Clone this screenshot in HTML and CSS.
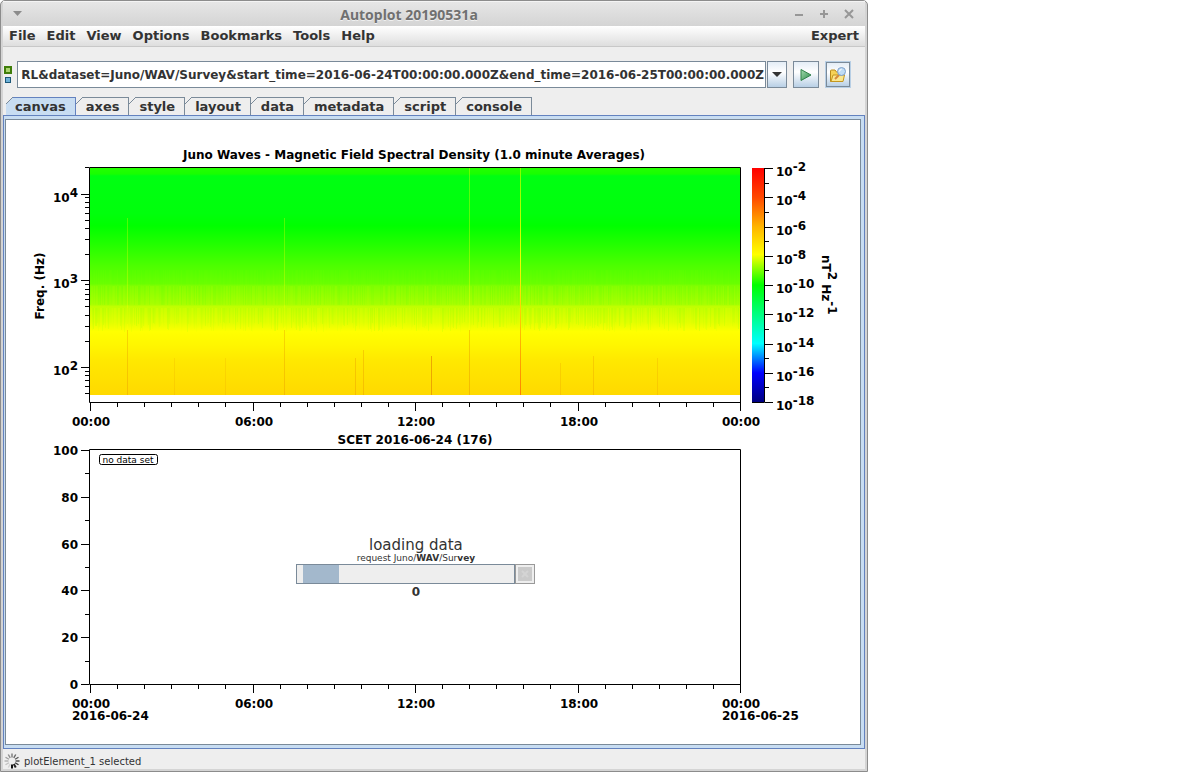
FILE: index.html
```
<!DOCTYPE html>
<html lang="en">
<head>
    <meta charset="UTF-8">
    <meta name="viewport" content="width=device-width, initial-scale=1.0">
    <title>Autoplot 20190531a</title>
    <link rel="stylesheet" href="styles.css">
</head>
<body>

<div class="window">
    <header class="titlebar">
        <button class="title-btn" aria-label="Window menu"><svg width="12" height="12"><path d="M1 3h9l-4.500 5z" fill="#8c8c8c"/></svg></button>
        <h1>Autoplot 20190531a</h1>
        <div class="title-actions">
            <button class="title-btn" aria-label="Minimize"><svg width="10" height="10"><path d="M1 6h8" stroke="#979797" stroke-width="2"/></svg></button>
            <button class="title-btn" aria-label="Maximize"><svg width="10" height="10"><path d="M1 5h8M5 1v8" stroke="#979797" stroke-width="2"/></svg></button>
            <button class="title-btn" aria-label="Close"><svg width="10" height="10"><path d="M1 1l8 8M9 1l-8 8" stroke="#979797" stroke-width="2"/></svg></button>
        </div>
    </header>

    <nav class="menubar">
        <button>File</button>
        <button>Edit</button>
        <button>View</button>
        <button>Options</button>
        <button>Bookmarks</button>
        <button>Tools</button>
        <button>Help</button>
        <button class="expert">Expert</button>
    </nav>

    <div class="addressbar">
        <svg class="source-icon" width="9" height="20">
            <rect x="1" y="2" width="6" height="6" fill="#a9d46f" stroke="#3f7d0a" stroke-width="2"/>
            <rect x="1.500" y="12.500" width="5" height="5" fill="#6db1d8" stroke="#1c5878"/>
        </svg>
        <input type="text" class="address" aria-label="Data address" value="RL&amp;dataset=Juno/WAV/Survey&amp;start_time=2016-06-24T00:00:00.000Z&amp;end_time=2016-06-25T00:00:00.000Z">
        <button class="metal-btn drop" aria-label="Recent addresses"><svg width="10" height="6"><path d="M0 0h10l-5 5z" fill="#333"/></svg></button>
        <button class="metal-btn" aria-label="Plot">
            <svg width="14" height="14">
                <defs><linearGradient id="go" x2="1" y2="1"><stop stop-color="#a5dcb0"/><stop offset="1" stop-color="#2c8a4b"/></linearGradient></defs>
                <path d="M2 1.500l10 5.500-10 5.500z" fill="url(#go)" stroke="#2f8049"/>
            </svg>
        </button>
        <button class="metal-btn inspect" aria-label="Inspect address">
            <svg width="16" height="16" viewBox="0 0 16 16">
                <path d="M.5 14.500V4q0-1 1-1h3.500l1.500 2h5.500v9.500z" fill="#f6d257" stroke="#b98b1b"/>
                <path d="M1 14.500l2-6.500h11.500l-1.500 6.500z" fill="#fbe78e" stroke="#c3961f"/>
                <path d="M9 8l-4 4" stroke="#d58a3d" stroke-width="2"/>
                <circle cx="11.500" cy="4.500" r="4" fill="#bfdcf5" stroke="#7d9fc9"/>
                <path d="M9.500 4.500q0-2 2-2" fill="none" stroke="#fff"/>
            </svg>
        </button>
    </div>

    <div class="tabs" role="tablist">
        <button class="tab active" role="tab" aria-selected="true">canvas</button>
        <button class="tab" role="tab">axes</button>
        <button class="tab" role="tab">style</button>
        <button class="tab" role="tab">layout</button>
        <button class="tab" role="tab">data</button>
        <button class="tab" role="tab">metadata</button>
        <button class="tab" role="tab">script</button>
        <button class="tab" role="tab">console</button>
    </div>

    <main class="pane">
        <div class="canvas">
            <svg class="plots" viewBox="6 120 854 624" preserveAspectRatio="xMidYMin meet">
                <defs>
                    <linearGradient id="spectrum" gradientUnits="userSpaceOnUse" x1="0" y1="168" x2="0" y2="395">
                        <stop offset="0" stop-color="#24ff00"/>
                        <stop offset="0.026" stop-color="#18ff00"/>
                        <stop offset="0.035" stop-color="#00ff12"/>
                        <stop offset="0.2" stop-color="#00ff0c"/>
                        <stop offset="0.255" stop-color="#00ff00"/>
                        <stop offset="0.34" stop-color="#24ff00"/>
                        <stop offset="0.43" stop-color="#4cff00"/>
                        <stop offset="0.51" stop-color="#68ff00"/>
                        <stop offset="0.52" stop-color="#80ff00"/>
                        <stop offset="0.6" stop-color="#a4ff00"/>
                        <stop offset="0.61" stop-color="#bfff00"/>
                        <stop offset="0.68" stop-color="#e0ff00"/>
                        <stop offset="0.72" stop-color="#ffff00"/>
                        <stop offset="0.78" stop-color="#fff600"/>
                        <stop offset="0.85" stop-color="#ffe800"/>
                        <stop offset="1" stop-color="#ffd900"/>
                    </linearGradient>
                    <linearGradient id="rainbow" x2="0" y2="1">
                        <stop offset="0" stop-color="#ff0000"/>
                        <stop offset="0.125" stop-color="#ff4800"/>
                        <stop offset="0.25" stop-color="#ffb400"/>
                        <stop offset="0.37" stop-color="#ffff00"/>
                        <stop offset="0.5" stop-color="#00ff00"/>
                        <stop offset="0.625" stop-color="#00ff80"/>
                        <stop offset="0.75" stop-color="#00ffff"/>
                        <stop offset="0.875" stop-color="#0000ff"/>
                        <stop offset="1" stop-color="#000080"/>
                    </linearGradient>
                    <linearGradient id="burst" gradientUnits="userSpaceOnUse" x1="0" y1="168" x2="0" y2="395">
                        <stop offset="0" stop-color="#80ff00"/>
                        <stop offset="0.4" stop-color="#f0ff00"/>
                        <stop offset="0.55" stop-color="#ffe000"/>
                        <stop offset="1" stop-color="#ff8000"/>
                    </linearGradient>
                </defs>

                <text class="middle" x="414" y="159">Juno Waves - Magnetic Field Spectral Density (1.0 minute Averages)</text>
                <rect x="90" y="168" width="650" height="227" fill="url(#spectrum)"/>
                <g id="streaks"></g>
                <rect x="520" y="168" width="1" height="227" fill="url(#burst)"/>
                <path class="line" d="M89.500 167.500H740.500V402.500H89.500z"/>
                <rect x="752" y="168" width="12" height="234" fill="url(#rainbow)"/>
                <path class="line" d="M752 402.500H764.500V168"/>
                <path class="line" d="M89.500 449.500H740.500V684.500H89.500z"/>
                <path class="line" id="ticks"/>
                <g id="labels"></g>

                <text class="middle" transform="translate(44 286) rotate(-90)">Freq. (Hz)</text>
                <text transform="translate(822 255) rotate(90)">nT<tspan dy="-6">2</tspan><tspan dy="6"> Hz</tspan><tspan dy="-6">-1</tspan></text>
                <text class="middle" x="415" y="444">SCET 2016-06-24 (176)</text>
                <text x="72" y="720">2016-06-24</text>
                <text x="722" y="720">2016-06-25</text>

                <rect class="line" x="99.500" y="454.500" width="58" height="10" rx="2"/>
                <text class="note middle" x="128" y="463">no data set</text>
            </svg>

            <div class="loading">
                <label class="task" for="load">loading data</label>
                <div class="request">request Juno/<b>WAV</b>/Sur<b>vey</b></div>
                <div class="load-row">
                    <progress id="load"></progress>
                    <button class="cancel" aria-label="Cancel"><svg width="14" height="14"><rect width="14" height="14" fill="#cacaca"/><path d="M4 4l6 6M10 4l-6 6" stroke="#d4d4d4" stroke-width="2"/></svg></button>
                </div>
                <div class="count">0</div>
            </div>
        </div>
    </main>

    <footer class="status">
        <svg id="spinner" width="16" height="16" viewBox="-8 -8 16 16"></svg>
        <span>plotElement_1 selected</span>
    </footer>
</div>

<script src="plot.js"></script>
</body>
</html>
```
FILE: styles.css
```
* {
    box-sizing: border-box;
}
body {
    margin: 0;
    background: white;
    color: #333;
    font: bold 12px "DejaVu Sans", sans-serif;
}
button {
    margin: 0;
    padding: 0;
    border: none;
    background: none;
    color: inherit;
    font: inherit;
}
svg {
    display: block;
}
.window {
    display: flex;
    flex-direction: column;
    width: calc(100% - 329px);
    min-width: 640px;
    min-height: 100vh;
    padding: 0 2px 2px;
    border: 1px solid #8c8c8c;
    border-radius: 5px 5px 0 0;
    background: #d4d4d4;
}

/* title bar and menus */
.titlebar {
    display: flex;
    align-items: center;
    height: 25px;
    padding: 0 11px 0 9px;
    border-top: 1px solid #f4f4f4;
    background: linear-gradient(#e6e6e6, #d4d4d4);
}
.titlebar h1 {
    flex: 1;
    margin: 0;
    text-align: center;
    color: #707070;
    font: bold 14px "Noto Sans", sans-serif;
    text-shadow: 0 1px #f0f0f0;
}
.title-actions {
    display: flex;
    gap: 15px;
}
.menubar {
    display: flex;
    gap: 11px;
    height: 21px;
    padding: 0 6px 2px;
    border-bottom: 1px solid #c8c8c8;
    background: linear-gradient(white, #dedede);
}
.menubar button {
    font-size: 13px;
}
.menubar .expert {
    margin-left: auto;
}

/* address bar */
.addressbar {
    display: flex;
    align-items: center;
    padding: 14px 14px 9px 1px;
    background: #eee;
}
.source-icon {
    flex: none;
    margin-right: 4px;
}
.address {
    flex: 1;
    min-width: 0;
    height: 27px;
    padding: 0 1px;
    border: 1px solid #7a8a99;
    background: white;
    color: #333;
    font: bold 12px "DejaVu Sans", sans-serif;
    text-align: right;
}
.metal-btn {
    display: flex;
    align-items: center;
    justify-content: center;
    width: 26px;
    height: 27px;
    margin-left: 6px;
    border: 1px solid #7a8a99;
    background: linear-gradient(#e4edf6, white 40%, #b8cfe5);
}
.metal-btn.drop {
    width: 20px;
    margin-left: 1px;
}
.metal-btn.inspect {
    border: 2px solid #7a8a99;
    outline: 1px solid #b8cfe5;
    outline-offset: -1px;
}

/* tabs */
.tabs {
    display: flex;
    padding-left: 3px;
    background: #eee;
}
.tab {
    position: relative;
    height: 18px;
    padding: 0 9px 0 10px;
    border: 1px solid #7a8a99;
    border-width: 1px 1px 0 0;
    font-size: 13px;
    line-height: 17px;
}
.tab::before {
    content: "";
    position: absolute;
    left: 0;
    top: -1px;
    width: 7px;
    height: 7px;
    background: linear-gradient(135deg, #eee 45%, #7a8a99 45%, #7a8a99 55%, transparent 55%);
}
.tab.active {
    padding-left: 9px;
    border-color: #6382bf;
    background: #c8ddf2;
}

/* canvas */
.pane {
    display: flex;
    flex: 1;
    padding: 3px 3px 3px 1px;
    border: 1px solid #6382bf;
    background: #c8ddf2;
}
.canvas {
    position: relative;
    flex: 1;
    border: 1px solid #7a8a99;
    background: white;
}
.plots {
    width: 100%;
    height: auto;
    fill: black;
}
.line {
    fill: none;
    stroke: black;
}
.middle {
    text-anchor: middle;
}
.end {
    text-anchor: end;
}
.note {
    font-size: 9px;
    font-weight: normal;
}

/* progress monitor, lies over the lower plot */
.loading {
    position: absolute;
    left: 34%;
    top: 67%;
    width: 28%;
    text-align: center;
}
.task {
    display: block;
    font-size: 15px;
    font-weight: normal;
    line-height: 15px;
}
.request {
    font-size: 9px;
    font-weight: normal;
    line-height: 11px;
}
.load-row {
    display: flex;
    height: 20px;
}
progress {
    flex: 1;
    min-width: 0;
    height: 20px;
    border: 1px solid #7a8a99;
    appearance: none;
    background: linear-gradient(to right, #eee 6px, #a3b8cc 6px, #a3b8cc 42px, #eee 42px);
}
progress::-webkit-progress-bar {
    background: transparent;
}
.cancel {
    display: grid;
    place-items: center;
    width: 20px;
    border: 1px solid #999;
    background: #eee;
}
.count {
    line-height: 16px;
}

/* status bar */
.status {
    display: flex;
    align-items: center;
    gap: 4px;
    height: 20px;
    padding: 4px 0 0 1px;
    background: #eee;
    font-size: 10px;
    font-weight: normal;
}
```
FILE: plot.js
```
const SVG = 'http://www.w3.org/2000/svg';
const labels = document.getElementById('labels');
let ticks = '';

function add(parent, name, attrs) {
    const el = document.createElementNS(SVG, name);
    for (const key in attrs) el.setAttribute(key, attrs[key]);
    parent.appendChild(el);
    return el;
}

function label(x, y, text, cls) {
    add(labels, 'text', { x: x, y: y, class: cls }).textContent = text;
}

function power(x, y, exponent, cls) {
    const text = add(labels, 'text', { x: x, y: y, class: cls });
    add(text, 'tspan', {}).textContent = '10';
    add(text, 'tspan', { dy: -5 }).textContent = exponent;
}

// time axes, one tick per hour
for (const bottom of [402, 684]) {
    for (let hour = 0; hour <= 24; hour++) {
        const x = Math.round(90 + hour * 650 / 24) + 0.5;
        const major = hour % 6 === 0;
        ticks += `M${x} ${bottom}v${major ? 9 : 5}`;
        if (major) label(x + 0.5, bottom + 24, String(hour % 24).padStart(2, '0') + ':00', 'middle');
    }
}

// frequency, log scale from 50 Hz to 20 kHz
for (let decade = 1; decade <= 4; decade++) {
    for (let n = 1; n < 10; n++) {
        const f = n * 10 ** decade;
        if (f < 50 || f > 20000) continue;
        const y = Math.round(367 - 86.75 * (Math.log10(f) - 2)) + 0.5;
        ticks += `M89 ${y}h${n === 1 ? -8 : -4}`;
        if (n === 1) power(78, y + 7, decade, 'end');
    }
}

// lower plot, 0 to 100
for (let v = 0; v <= 100; v += 10) {
    const y = Math.round(684 - v * 2.34) + 0.5;
    ticks += `M89 ${y}h${v % 20 ? -4 : -8}`;
    if (v % 20 === 0) label(78, y + 4.5, v, 'end');
}

// colour bar
for (let e = -2; e >= -18; e--) {
    const y = Math.round(168 + (-2 - e) * 14.625) + 0.5;
    ticks += `M765 ${y}h${e % 2 ? 4 : 8}`;
    if (e % 2 === 0) power(776, y + 7.5, e, '');
}
document.getElementById('ticks').setAttribute('d', ticks);

// fine vertical variation of the spectra
const streaks = document.getElementById('streaks');
let seed = 7;
function random() {
    seed = (seed * 16807) % 2147483647;
    return seed / 2147483647;
}
for (let x = 90; x < 740; x++) {
    add(streaks, 'rect', { x: x, y: 308, width: 1, height: 14 + Math.round(random() * 10), fill: random() > 0.5 ? '#ff0' : '#8f0', opacity: random() * 0.18 });
    add(streaks, 'rect', { x: x, y: 286, width: 1, height: 19, fill: random() > 0.5 ? '#cf0' : '#4f0', opacity: random() * 0.12 });
    add(streaks, 'rect', { x: x, y: 270, width: 1, height: 16, fill: '#af0', opacity: random() * 0.06 });
}
for (const [x, top, opacity] of [[127, 218, 0.3], [284, 218, 0.3], [469, 168, 0.35], [431, 356, 0.6], [355, 358, 0.3], [363, 350, 0.3], [174, 358, 0.15], [225, 358, 0.15], [593, 356, 0.25], [560, 363, 0.2], [657, 358, 0.2]]) {
    if (top < 330) add(streaks, 'rect', { x: x, y: top, width: 1, height: 330 - top, fill: '#ff0', opacity: opacity });
    const start = Math.max(top, 330);
    add(streaks, 'rect', { x: x, y: start, width: 1, height: 395 - start, fill: '#e08000', opacity: opacity });
}

// busy indicator, twelve fading spokes
const spinner = document.getElementById('spinner');
for (let i = 0; i < 12; i++) {
    add(spinner, 'path', { d: 'M0 3.500V7.500', stroke: '#111', 'stroke-width': i < 2 ? 2 : 1.4, opacity: 1 - i * 0.08, transform: `rotate(${-i * 30})` });
}
```
